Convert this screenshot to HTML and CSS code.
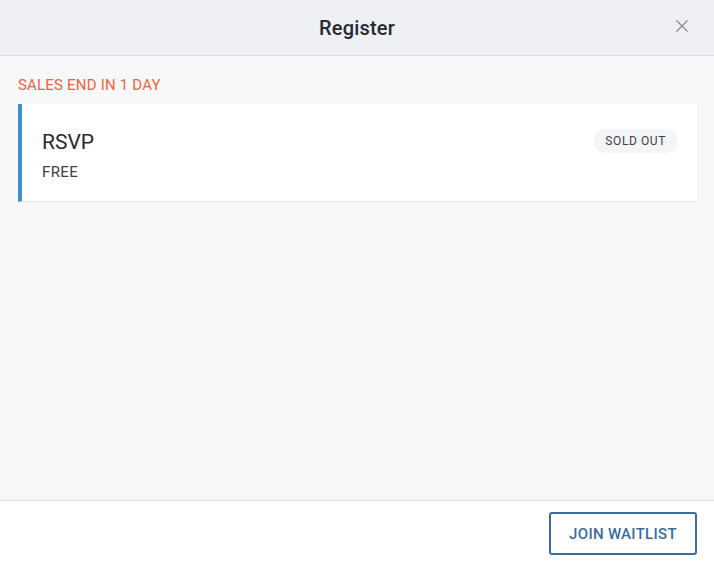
FILE: index.html
```html
<!DOCTYPE html>
<html lang="en">
<head>
    <meta charset="UTF-8">
    <meta name="viewport" content="width=device-width, initial-scale=1.0">
    <title>Register</title>
    <link rel="stylesheet" href="styles.css">
</head>
<body>

    <div class="modal">
        <!-- Header -->
        <header class="modal-header">
            <h2>Register</h2>
            <button class="close" aria-label="Close">
                <svg width="12" height="12" viewBox="0 0 12 12">
                    <path d="M0.5 0.5L11.5 11.5M11.5 0.5L0.5 11.5" stroke="#80848c" stroke-width="1.1" fill="none"/>
                </svg>
            </button>
        </header>

        <!-- Tickets -->
        <main class="modal-body">
            <p class="sales-end">SALES END IN 1 DAY</p>
            <div class="ticket">
                <div class="ticket-info">
                    <h3>RSVP</h3>
                    <p>FREE</p>
                </div>
                <span class="badge">SOLD OUT</span>
            </div>
        </main>

        <!-- Footer -->
        <footer class="modal-footer">
            <button class="waitlist">JOIN WAITLIST</button>
        </footer>
    </div>

</body>
</html>
```

FILE: styles.css
```css
body {
    font-family: Roboto, "Liberation Sans", sans-serif;
    margin: 0;
    padding: 0;
    background: #f8f8fa;
}

.modal {
    display: flex;
    flex-direction: column;
    height: 561px;
}

.modal-header {
    position: relative;
    height: 55px;
    background: #eef0f3;
    border-bottom: 1px solid #dcdee3;
    display: flex;
    justify-content: center;
    align-items: center;
}

.modal-header h2 {
    margin: 0;
    font-size: 20px;
    font-weight: 500;
    color: #272a33;
    letter-spacing: 0.2px;
}

.close {
    position: absolute;
    right: 26px;
    top: 20px;
    background: none;
    border: none;
    padding: 0;
    cursor: pointer;
    line-height: 0;
}

.modal-body {
    flex: 1;
    padding: 19px 17px 0 18px;
}

.sales-end {
    margin: 0 0 9px;
    font-size: 15px;
    color: #e8663d;
    letter-spacing: 0.2px;
    line-height: 20px;
}

.ticket {
    background: #fff;
    border-left: 4px solid #3d8fd0;
    border-bottom: 1px solid #dfe1e6;
    display: flex;
    justify-content: space-between;
    align-items: flex-start;
    padding: 25px 19px 20px 20px;
}

.ticket h3 {
    margin: 0;
    font-size: 21px;
    font-weight: 400;
    color: #272a33;
    line-height: 26px;
}

.ticket p {
    margin: 8px 0 0;
    font-size: 15px;
    color: #3d4049;
    letter-spacing: 0.4px;
}

.badge {
    background: #f4f5f7;
    color: #3d4049;
    font-size: 12px;
    letter-spacing: 0.6px;
    padding: 5px 12px;
    border-radius: 12px;
    line-height: 14px;
}

.modal-footer {
    height: 61px;
    background: #fff;
    border-top: 1px solid #dcdee3;
    display: flex;
    justify-content: flex-end;
    align-items: flex-start;
    padding: 11px 17px 0;
    box-sizing: border-box;
}

.waitlist {
    font-family: inherit;
    background: #fff;
    border: 2px solid #3a6c9f;
    border-radius: 3px;
    color: #3a6c9f;
    font-size: 15px;
    font-weight: 500;
    letter-spacing: 0.3px;
    width: 148px;
    height: 43px;
    cursor: pointer;
}
```
